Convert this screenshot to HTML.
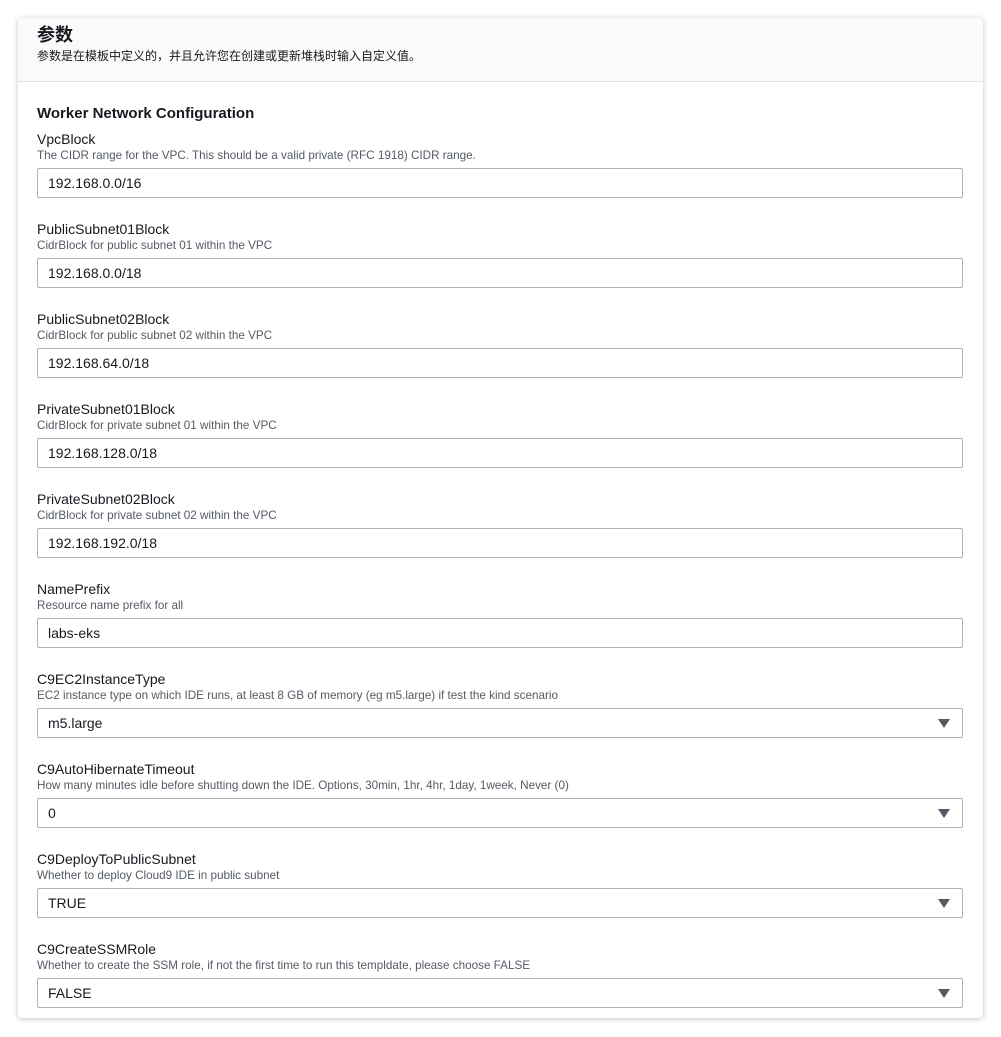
<!DOCTYPE html>
<html><head><meta charset="utf-8"><style>
body{margin:0;background:#fff;width:1001px;height:1037px;overflow:hidden;font-family:"Liberation Sans","Noto Sans CJK SC",sans-serif;color:#16191f;}
.card{position:absolute;left:18px;top:18px;width:965px;height:1000px;background:#fff;border-radius:4px;box-shadow:0 1px 6px rgba(0,0,0,.25);overflow:hidden}
.hd{position:absolute;left:0;top:0;width:965px;height:63px;background:#fafafa;border-bottom:1px solid #e4e4e4}
.t{position:absolute;left:19px;top:3px;font-size:18px;font-weight:bold}
.s{position:absolute;left:19px;top:29px;font-size:12px;color:#16191f}
.sec{position:absolute;left:19px;top:87px;font-size:15px;font-weight:bold}
.f{position:absolute;left:19px;width:926px}
.l{position:absolute;top:0;font-size:14px;line-height:18px}
.d{position:absolute;top:19px;font-size:11.7px;color:#545b64;white-space:nowrap}
.i{position:absolute;top:38px;left:0;height:28px;border:1px solid #aab7b8;border-radius:2px;font-size:14px;line-height:28px;padding-left:10px;width:914px}
.a{position:absolute;right:12px;top:10px;width:0;height:0;border-left:6px solid transparent;border-right:6px solid transparent;border-top:9px solid #545b64}
</style></head><body><div class="card">
<div class="hd"><div class="t">参数</div><div class="s">参数是在模板中定义的，并且允许您在创建或更新堆栈时输入自定义值。</div></div>
<div class="sec">Worker Network Configuration</div>
<div class="f" style="top:112px"><div class="l">VpcBlock</div><div class="d">The CIDR range for the VPC. This should be a valid private (RFC 1918) CIDR range.</div><div class="i">192.168.0.0/16</div></div>
<div class="f" style="top:202px"><div class="l">PublicSubnet01Block</div><div class="d">CidrBlock for public subnet 01 within the VPC</div><div class="i">192.168.0.0/18</div></div>
<div class="f" style="top:292px"><div class="l">PublicSubnet02Block</div><div class="d">CidrBlock for public subnet 02 within the VPC</div><div class="i">192.168.64.0/18</div></div>
<div class="f" style="top:382px"><div class="l">PrivateSubnet01Block</div><div class="d">CidrBlock for private subnet 01 within the VPC</div><div class="i">192.168.128.0/18</div></div>
<div class="f" style="top:472px"><div class="l">PrivateSubnet02Block</div><div class="d">CidrBlock for private subnet 02 within the VPC</div><div class="i">192.168.192.0/18</div></div>
<div class="f" style="top:562px"><div class="l">NamePrefix</div><div class="d">Resource name prefix for all</div><div class="i">labs-eks</div></div>
<div class="f" style="top:652px"><div class="l">C9EC2InstanceType</div><div class="d">EC2 instance type on which IDE runs, at least 8 GB of memory (eg m5.large) if test the kind scenario</div><div class="i">m5.large<div class="a"></div></div></div>
<div class="f" style="top:742px"><div class="l">C9AutoHibernateTimeout</div><div class="d">How many minutes idle before shutting down the IDE. Options, 30min, 1hr, 4hr, 1day, 1week, Never (0)</div><div class="i">0<div class="a"></div></div></div>
<div class="f" style="top:832px"><div class="l">C9DeployToPublicSubnet</div><div class="d">Whether to deploy Cloud9 IDE in public subnet</div><div class="i">TRUE<div class="a"></div></div></div>
<div class="f" style="top:922px"><div class="l">C9CreateSSMRole</div><div class="d">Whether to create the SSM role, if not the first time to run this templdate, please choose FALSE</div><div class="i">FALSE<div class="a"></div></div></div>
</div></body></html>
